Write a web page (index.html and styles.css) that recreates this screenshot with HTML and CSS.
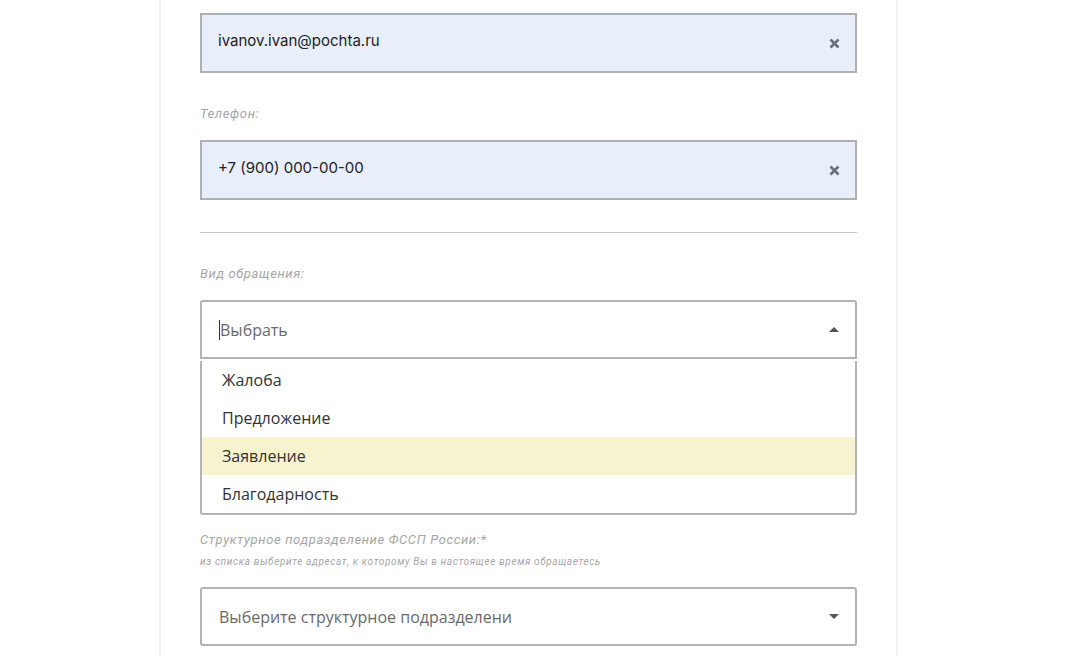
FILE: index.html
```html
<!DOCTYPE html>
<html>

<head>
    <title>Обращение</title>
    <link rel="stylesheet" href="styles.css">
</head>

<body>
    <div class="page">
        <form class="card">
            <div class="input filled">
                <span class="value">ivanov.ivan@pochta.ru</span>
                <svg class="clear" width="11" height="11" viewBox="0 0 11 11">
                    <path d="M1.5 1.5 L9.5 9.5 M9.5 1.5 L1.5 9.5" stroke="#6b6f78" stroke-width="2.6" />
                </svg>
            </div>

            <div class="label">Телефон:</div>
            <div class="input filled">
                <span class="value">+7 (900) 000-00-00</span>
                <svg class="clear" width="11" height="11" viewBox="0 0 11 11">
                    <path d="M1.5 1.5 L9.5 9.5 M9.5 1.5 L1.5 9.5" stroke="#6b6f78" stroke-width="2.6" />
                </svg>
            </div>

            <hr class="divider">

            <div class="label">Вид обращения:</div>
            <div class="select open">
                <span class="placeholder"><span class="caret"></span>Выбрать</span>
                <span class="arrow up"></span>
            </div>
            <ul class="options">
                <li>Жалоба</li>
                <li>Предложение</li>
                <li class="hover">Заявление</li>
                <li>Благодарность</li>
            </ul>

            <div class="label tight">Структурное подразделение ФССП России:*</div>
            <div class="hint">из списка выберите адресат, к которому Вы в настоящее время обращаетесь</div>
            <div class="select">
                <span class="placeholder clip">Выберите структурное подразделение</span>
                <span class="arrow"></span>
            </div>
        </form>
    </div>
</body>

</html>
```

FILE: styles.css
```css
body {
    margin: 0;
    background-color: #fff;
}

.page {
    padding-left: 159px;
}

.card {
    width: 657px;
    padding: 13px 39px 20px;
    border-left: 2px solid #f1f2f3;
    border-right: 2px solid #f1f2f3;
}

.input {
    display: flex;
    align-items: center;
    justify-content: space-between;
    height: 56px;
    padding: 0 15px 0 16px;
    border: 2px solid #adb0b4;
    margin-bottom: 31px;
}

.input.filled {
    background-color: #e8effb;
}

.input .value {
    font-family: Inter, "Noto Sans", sans-serif;
    font-size: 15px;
    color: #222;
    margin-top: -6px;
}

.clear {
    display: block;
}

.label {
    font-family: Roboto, "Liberation Sans", sans-serif;
    font-style: italic;
    font-size: 13px;
    letter-spacing: 0.63px;
    line-height: 20px;
    color: #a6a6a6;
    margin-bottom: 16px;
}

.label.tight {
    margin-top: 15px;
    margin-bottom: 5px;
}

.hint {
    font-family: Roboto, "Liberation Sans", sans-serif;
    font-style: italic;
    font-size: 10px;
    letter-spacing: 0.64px;
    line-height: 14px;
    color: #a6a6a6;
    margin-bottom: 18px;
}

.divider {
    border: none;
    border-top: 1px solid #c8c8c8;
    margin: 32px 0 31px;
}

.select {
    display: flex;
    align-items: center;
    justify-content: space-between;
    height: 55px;
    padding: 0 16px 0 17px;
    border: 2px solid #b3b3b3;
    border-radius: 3px;
    background-color: #fff;
}

.select.open {
    border-radius: 3px 3px 0 0;
}

.placeholder {
    font-family: "Open Sans", "Noto Sans", sans-serif;
    font-size: 16px;
    color: #6a6a6a;
    display: flex;
    align-items: center;
}

.placeholder.clip {
    width: 292px;
    overflow: hidden;
    white-space: nowrap;
}

.caret {
    display: inline-block;
    width: 1px;
    height: 20px;
    background-color: #333;
}

.arrow {
    width: 0;
    height: 0;
    border-left: 5px solid transparent;
    border-right: 5px solid transparent;
    border-top: 5px solid #555;
}

.arrow.up {
    border-top: none;
    border-bottom: 5px solid #555;
}

.options {
    list-style: none;
    margin: 0;
    padding: 0;
    border: 2px solid #b3b3b3;
    border-top: none;
    border-radius: 0 0 3px 3px;
}

.options li {
    font-family: "Open Sans", "Noto Sans", sans-serif;
    font-size: 16px;
    color: #333;
    height: 38px;
    line-height: 38px;
    padding-left: 20px;
}

.options li:first-child {
    margin-top: 2px;
}

.options li.hover {
    background-color: #f8f3cf;
}
```
